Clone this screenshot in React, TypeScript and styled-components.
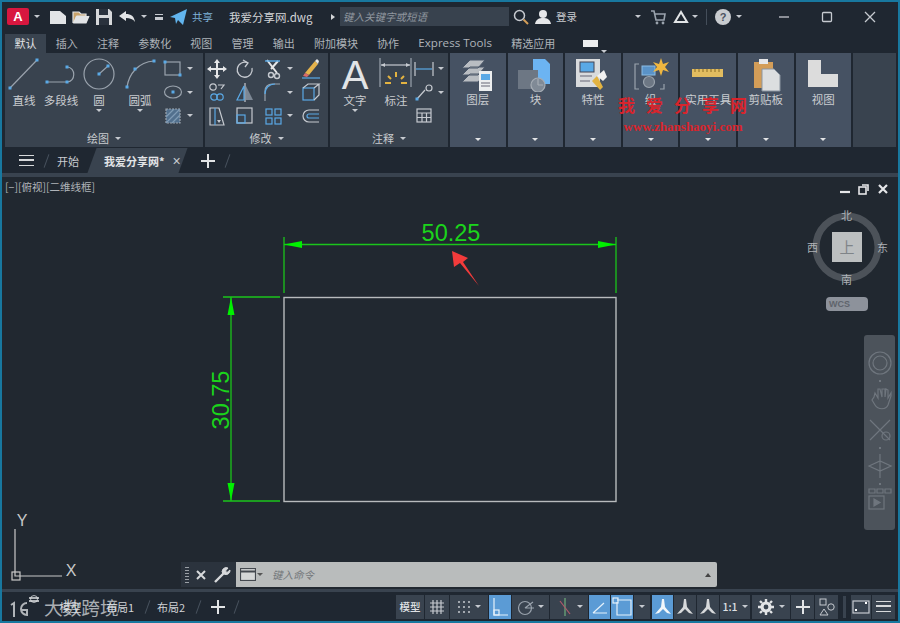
import React from "react";
import styled, { createGlobalStyle } from "styled-components";

const LINE = "#c6cad0";
const BLUE = "#5aa9e6";
const GREEN = "#1bc41b";
const BRIGHT = "#00f000";

const GlobalStyle = createGlobalStyle`
  html, body { margin: 0; padding: 0; background: #202831; }
  body { font-family: "Noto Sans CJK SC", "Noto Sans", sans-serif; }
`;

const Ic: React.FC<{ w?: number; h?: number; children?: React.ReactNode; stroke?: string; sw?: number }> = ({
  w = 22,
  h = 22,
  children,
  stroke = LINE,
  sw = 1.2,
}) => (
  <svg width={w} height={h} viewBox={`0 0 ${w} ${h}`} fill="none" stroke={stroke} strokeWidth={sw} style={{ flex: "none", display: "block" }}>
    {children}
  </svg>
);

const Dot: React.FC<{ x: number; y: number }> = ({ x, y }) => <rect x={x - 1.5} y={y - 1.5} width={3} height={3} fill={BLUE} stroke="none" />;

const Icons = {
  line: (
    <Ic w={36} h={36}>
      <path d="M4 31 31 3" stroke="#9aa3ad" />
      <Dot x={4} y={31} />
      <Dot x={31} y={3} />
    </Ic>
  ),
  polyline: (
    <Ic w={38} h={36}>
      <path d="M5 25H25C34 25 34 10 25 10" stroke="#9aa3ad" />
      <Dot x={5} y={25} />
      <Dot x={25} y={25} />
      <Dot x={25} y={10} />
    </Ic>
  ),
  circle: (
    <Ic w={38} h={36}>
      <circle cx={19} cy={17} r={15} stroke="#9aa3ad" />
      <path d="M19 17 28 9" stroke="#9aa3ad" />
      <Dot x={19} y={17} />
      <Dot x={28} y={9} />
    </Ic>
  ),
  arc: (
    <Ic w={44} h={36}>
      <path d="M9 30C11 17 20 5 36 4" stroke="#9aa3ad" />
      <Dot x={9} y={30} />
      <Dot x={17} y={12} />
      <Dot x={36} y={4} />
    </Ic>
  ),
  rect: (
    <Ic>
      <rect x={3} y={4} width={15} height={13} stroke="#9aa3ad" />
      <Dot x={18} y={17} />
      <Dot x={3} y={4} />
    </Ic>
  ),
  ellipse: (
    <Ic>
      <ellipse cx={11} cy={11} rx={8.5} ry={6} stroke="#9aa3ad" />
      <Dot x={11} y={11} />
    </Ic>
  ),
  hatch: (
    <Ic>
      <rect x={4} y={4} width={14} height={14} fill="#52708e" stroke="#9aa3ad" strokeDasharray="2 1" />
      <path d="M4 12 12 4M4 18 18 4M10 18 18 10" stroke="#7f9bb5" />
    </Ic>
  ),
  move: (
    <Ic sw={2}>
      <path d="M11 3V19M3 11H19" stroke="#e6e7e9" />
      <path d="M11 1 14 5H8ZM11 21 14 17H8ZM1 11 5 8V14ZM21 11 17 8V14Z" fill="#e6e7e9" stroke="none" />
    </Ic>
  ),
  rotate: (
    <Ic sw={1.3}>
      <path d="M14 5A7.5 7.5 0 1 0 18 10" />
      <path d="M9 2 14 5 11 9" />
    </Ic>
  ),
  trim: (
    <Ic sw={1.4}>
      <path d="M5 2 15 15M16 3 9 11" stroke="#e6e7e9" strokeWidth={2} />
      <circle cx={9} cy={17} r={2.5} />
      <circle cx={15} cy={18} r={2.5} />
      <path d="M3 3H18" stroke={BLUE} />
    </Ic>
  ),
  erase: (
    <Ic>
      <path d="M5 15 15 3 18 6 9 17Z" fill="#e5b34c" stroke="none" />
      <path d="M15 3 18 6 19 3 17 1Z" fill="#e6e7e9" stroke="none" />
      <path d="M5 15 9 17 7 19 3 18Z" fill="#d96a6a" stroke="none" />
      <path d="M2 20H20" stroke={BLUE} />
    </Ic>
  ),
  copy: (
    <Ic>
      <circle cx={7} cy={6} r={3.2} stroke={LINE} />
      <circle cx={8} cy={16} r={3.2} stroke={BLUE} />
      <circle cx={14} cy={16} r={3.2} stroke={BLUE} />
      <path d="M12 4H18L15 8" stroke={LINE} />
    </Ic>
  ),
  mirror: (
    <Ic>
      <path d="M11 2V21" stroke={LINE} />
      <path d="M10 5 3 19H10Z" stroke={BLUE} />
      <path d="M12 5 19 19H12Z" fill="#7c8794" stroke="none" />
    </Ic>
  ),
  fillet: (
    <Ic>
      <path d="M3 20V10C3 6 6 3 10 3H18" stroke="#9aa3ad" />
      <path d="M3 13C3 7 7 3 13 3" stroke={BLUE} />
    </Ic>
  ),
  solid: (
    <Ic>
      <rect x={3} y={7} width={11} height={12} stroke={BLUE} />
      <path d="M3 7 8 3H19L14 7M19 3V14L14 19" stroke={LINE} />
    </Ic>
  ),
  stretch: (
    <Ic>
      <path d="M4 3H13L18 20H4Z" stroke={LINE} />
      <path d="M9 3V20" stroke={BLUE} />
      <path d="M11 15H15L13 18Z" fill={LINE} stroke="none" />
    </Ic>
  ),
  scale: (
    <Ic>
      <rect x={3} y={3} width={15} height={15} stroke={LINE} />
      <rect x={3} y={10} width={8} height={8} stroke={BLUE} />
    </Ic>
  ),
  array: (
    <Ic>
      <rect x={4} y={4} width={6} height={6} stroke={BLUE} />
      <rect x={13} y={4} width={6} height={6} stroke={BLUE} />
      <rect x={4} y={13} width={6} height={6} stroke={BLUE} />
      <rect x={13} y={13} width={6} height={6} stroke={BLUE} />
    </Ic>
  ),
  offset: (
    <Ic>
      <path d="M19 5H9A6 6 0 0 0 9 17H19" stroke={LINE} />
      <path d="M19 9H9A2 2 0 0 0 9 13H19" stroke={BLUE} />
    </Ic>
  ),
  dimension: (
    <Ic w={34} h={36}>
      <path d="M1 1V30M32 1V30" stroke="#9aa3ad" />
      <path d="M2 8H31" stroke={LINE} />
      <path d="M2 8 6 6V10ZM31 8 27 6V10Z" fill={LINE} stroke="none" />
      <path d="M17 15V20M9 19 12 22M25 19 22 22M6 26H12M22 26H28" stroke="#e3b341" strokeWidth={2} />
    </Ic>
  ),
  linear: (
    <Ic>
      <path d="M2 4V18M20 4V18" stroke={LINE} />
      <path d="M3 11H19" stroke={BLUE} />
    </Ic>
  ),
  leader: (
    <Ic>
      <path d="M4 18 12 9" stroke={LINE} />
      <circle cx={16} cy={7} r={3} stroke={LINE} />
      <Dot x={4} y={18} />
    </Ic>
  ),
  table: (
    <Ic>
      <rect x={4} y={4} width={14} height={13} stroke={LINE} />
      <path d="M4 8H18M4 12.5H18M9 8V17M13.5 8V17" stroke={LINE} />
    </Ic>
  ),
};

const PanelIcons = {
  layer: (
    <Ic w={36} h={34}>
      <path d="M2 10 10 2H25L18 10ZM2 17 10 9H25L18 17ZM2 24 10 16H25L18 24Z" fill="#b9bdc2" stroke="#4a5668" strokeWidth={1} />
      <rect x={19} y={13} width={13} height={20} fill="#eceeef" stroke="none" />
      <rect x={21} y={16} width={9} height={6} fill="#5aa9e6" stroke="none" />
      <path d="M21 25H30M21 28H30" stroke="#667" />
    </Ic>
  ),
  block: (
    <Ic w={36} h={34}>
      <path d="M16 1H28L33 6V26H16Z" fill="#6cb4f2" stroke="none" />
      <rect x={1} y={12} width={20} height={19} fill="#6d7784" stroke="none" />
      <circle cx={21} cy={27} r={7} fill="#808a96" stroke="#a6adb5" />
      <path d="M21 27V21M21 27H26" stroke="#a6adb5" />
    </Ic>
  ),
  props: (
    <Ic w={36} h={34}>
      <rect x={1} y={1} width={24} height={28} fill="#d9dbdd" stroke="none" />
      <rect x={5} y={4} width={14} height={10} fill="#5aa9e6" stroke="#445" strokeWidth={1} />
      <path d="M5 18H17M5 23H15" stroke="#667" />
      <path d="M17 23 22 18 28 29 25 32Z" fill="#e3b341" stroke="none" />
      <path d="M22 18 29 12 32 19 28 23Z" fill="#f2f2f2" stroke="none" />
    </Ic>
  ),
  group: (
    <Ic w={36} h={34}>
      <path d="M6 6H2V31H6M27 31H31V26" stroke="#9aa3ad" />
      <rect x={9} y={8} width={13} height={9} fill="#5a93c8" stroke="#8bbde6" strokeWidth={1} />
      <circle cx={16} cy={24} r={5.5} fill="#6d7784" stroke="#9aa3ad" />
      <path d="M28 0 30 6 36 4 32 9 36 14 30 12 28 18 26 12 20 14 24 9 20 4 26 6Z" fill="#f0b740" stroke="none" />
    </Ic>
  ),
  ruler: (
    <Ic w={36} h={34}>
      <rect x={2} y={11} width={31} height={8} fill="#e2bd60" stroke="none" />
      <path d="M5 11V14M9 11V14M13 11V14M17 11V14M21 11V14M25 11V14M29 11V14" stroke="#8a6d25" strokeWidth={1} />
    </Ic>
  ),
  paste: (
    <Ic w={36} h={34}>
      <rect x={6} y={4} width={19} height={26} fill="#d39d58" stroke="none" />
      <rect x={11} y={1} width={9} height={5} fill="#e6e7e9" stroke="none" />
      <path d="M14 11H26L32 17V33H14Z" fill="#dcdee0" stroke="#8b95a1" strokeWidth={1} />
    </Ic>
  ),
  view: (
    <Ic w={36} h={34}>
      <path d="M3 2H16V16H33V29H3Z" fill="#dcdcdc" stroke="none" />
    </Ic>
  ),
};

const Tool: React.FC<{ w: number; label: string; caret?: boolean; children: React.ReactNode }> = ({ w, label, caret, children }) => (
  <LargeTool $w={w}>
    {children}
    <ToolLabel>{label}</ToolLabel>
    {caret && <ToolCaret />}
  </LargeTool>
);

const Panel: React.FC<{ w: number; title: string; children: React.ReactNode }> = ({ w, title, children }) => (
  <RibbonPanel $w={w}>
    <PanelBody>{children}</PanelBody>
    <PanelTitle>
      {title}
      <Caret />
    </PanelTitle>
  </RibbonPanel>
);

const Small: React.FC<{ caret?: boolean; children: React.ReactNode }> = ({ caret, children }) => (
  <SmallTool>
    {children}
    {caret && <Caret />}
  </SmallTool>
);

const tabs = ["默认", "插入", "注释", "参数化", "视图", "管理", "输出", "附加模块", "协作", "Express Tools", "精选应用"];
const vertical: [string, React.ReactNode][] = [
  ["图层", PanelIcons.layer],
  ["块", PanelIcons.block],
  ["特性", PanelIcons.props],
  ["组", PanelIcons.group],
  ["实用工具", PanelIcons.ruler],
  ["剪贴板", PanelIcons.paste],
  ["视图", PanelIcons.view],
];

export default function App() {
  return (
    <Frame>
      <GlobalStyle />
      <TitleBar>
        <Logo>A</Logo>
        <Caret $ml={5} />
        <QuickIcons>
          <Ic w={18} h={18}>
            <path d="M1 3H11L17 8V16H1Z" fill="#e2e4e6" stroke="none" />
          </Ic>
          <Ic w={18} h={18}>
            <path d="M1 15V4H7L9 6H14V8H5L2 15H14L17 8" fill="#c9a36a" stroke="#e2e4e6" />
            <path d="M1 15 4 8H17L14 15Z" fill="#e2e4e6" stroke="none" />
          </Ic>
          <Ic w={18} h={18}>
            <path d="M1 1H14L17 4V17H1Z" fill="#d6d8da" stroke="none" />
            <rect x={4} y={1} width={9} height={6} fill="#2a323d" stroke="none" />
            <rect x={4} y={10} width={10} height={7} fill="#2a323d" stroke="none" />
          </Ic>
          <Ic w={18} h={18}>
            <path d="M1 8 8 3V6C13 6 16 8 17 14 15 11 12 10 8 10V13Z" fill="#e2e4e6" stroke="none" />
          </Ic>
        </QuickIcons>
        <Caret $ml={5} />
        <MenuGlyph />
        <ShareBlock>
          <Ic w={18} h={18}>
            <path d="M0 9 17 1 13 17 8 12 6 16 5 10Z" fill="#62b5ee" stroke="none" />
          </Ic>
          共享
        </ShareBlock>
        <FileName>我爱分享网.dwg</FileName>
        <RightArrow />
        <SearchBox>键入关键字或短语</SearchBox>
        <SearchIcon>
          <Ic w={16} h={16} sw={1.5}>
            <circle cx={6.5} cy={6.5} r={5} />
            <path d="M10.5 10.5 15 15" stroke="#d39d58" strokeWidth={2} />
          </Ic>
        </SearchIcon>
        <Ic w={16} h={16}>
          <circle cx={8} cy={5} r={4} fill="#e6e7e9" stroke="none" />
          <path d="M0 15C1 10 4 9 8 9S15 10 16 15Z" fill="#e6e7e9" stroke="none" />
        </Ic>
        <SignIn>登录</SignIn>
        <Caret $ml={58} />
        <CartWrap>
          <Ic w={16} h={16}>
            <path d="M1 2H4L6 11H14L15 5H5" stroke="#9aa3ad" strokeWidth={1.6} />
            <circle cx={7} cy={14} r={1.4} fill="#9aa3ad" stroke="none" />
            <circle cx={13} cy={14} r={1.4} fill="#9aa3ad" stroke="none" />
          </Ic>
        </CartWrap>
        <Ic w={16} h={16} sw={2}>
          <path d="M8 3 2 13H14Z" stroke="#e2e4e6" />
        </Ic>
        <Caret $ml={3} />
        <TitleDivider />
        <HelpBadge>?</HelpBadge>
        <Caret $ml={5} />
        <WindowButtons>
          <Ic w={12} h={12} sw={1.3}>
            <path d="M1 6H11" />
          </Ic>
          <Ic w={12} h={12} sw={1.3}>
            <rect x={1.5} y={1.5} width={9} height={9} rx={1} />
          </Ic>
          <Ic w={12} h={12} sw={1.3}>
            <path d="M1 1 11 11M11 1 1 11" />
          </Ic>
        </WindowButtons>
      </TitleBar>

      <TabRow>
        {tabs.map((t, i) => (
          <RibbonTab key={t} $active={i === 0} $latin={t === "Express Tools"}>
            {t}
          </RibbonTab>
        ))}
        <MiniBox />
        <Caret $ml={3} />
      </TabRow>

      <Ribbon>
        <Panel w={198} title="绘图">
          <Tool w={36} label="直线">
            {Icons.line}
          </Tool>
          <Tool w={38} label="多段线">
            {Icons.polyline}
          </Tool>
          <Tool w={38} label="圆" caret>
            {Icons.circle}
          </Tool>
          <Tool w={44} label="圆弧" caret>
            {Icons.arc}
          </Tool>
          <SmallGrid $cols="38px">
            <Small caret>{Icons.rect}</Small>
            <Small caret>{Icons.ellipse}</Small>
            <Small caret>{Icons.hatch}</Small>
          </SmallGrid>
        </Panel>
        <Panel w={123} title="修改">
          <SmallGrid $cols="28px 28px 38px 28px">
            <Small>{Icons.move}</Small>
            <Small>{Icons.rotate}</Small>
            <Small caret>{Icons.trim}</Small>
            <Small>{Icons.erase}</Small>
            <Small>{Icons.copy}</Small>
            <Small>{Icons.mirror}</Small>
            <Small caret>{Icons.fillet}</Small>
            <Small>{Icons.solid}</Small>
            <Small>{Icons.stretch}</Small>
            <Small>{Icons.scale}</Small>
            <Small caret>{Icons.array}</Small>
            <Small>{Icons.offset}</Small>
          </SmallGrid>
        </Panel>
        <Panel w={118} title="注释">
          <Tool w={48} label="文字" caret>
            <BigLetter>A</BigLetter>
          </Tool>
          <Tool w={34} label="标注">
            {Icons.dimension}
          </Tool>
          <SmallGrid $cols="34px">
            <Small caret>{Icons.linear}</Small>
            <Small caret>{Icons.leader}</Small>
            <Small>{Icons.table}</Small>
          </SmallGrid>
        </Panel>
        {vertical.map(([label, icon]) => (
          <VerticalPanel key={label}>
            {icon}
            <ToolLabel>{label}</ToolLabel>
            <BottomCaret />
          </VerticalPanel>
        ))}
        <RibbonRest />
      </Ribbon>

      <DocBar>
        <Hamburger />
        <Slash />
        <DocTab>开始</DocTab>
        <ActiveDoc>
          <ActiveName>我爱分享网*</ActiveName>
          <DocClose>×</DocClose>
        </ActiveDoc>
        <PlusGlyph $ml={18} />
        <Slash $ml={12} />
      </DocBar>
      <Strip $h={4} />

      <Viewport>
        <CanvasSvg viewBox="2 177 896 412">
          <g stroke={GREEN} strokeWidth={1.3}>
            <path d="M284 237V293M616 237V293M284 244.5H616" />
            <path d="M231 297V501M223 297H280M223 501H280" />
          </g>
          <g fill={BRIGHT}>
            <path d="M284 244.5 302 241V248ZM616 244.5 598 241V248Z" />
            <path d="M231 297 227.5 315H234.5ZM231 501 227.5 483H234.5Z" />
          </g>
          <rect x={284} y={297.5} width={332} height={204} fill="none" stroke="#b8bbbd" strokeWidth={1.4} />
          <DimText x={451} y={240.5}>
            50.25
          </DimText>
          <DimText x={228.5} y={400} transform="rotate(-90 228.5 400)">
            30.75
          </DimText>
          <path d="M452 251 468 258 463 262 479 286 460 263 454 267Z" fill="#f23b3b" />
          <g stroke="#c8c8c8" strokeWidth={1.2} fill="none">
            <path d="M15 529V576H62" />
            <rect x={12} y={572} width={8} height={8} />
          </g>
          <AxisText x={22} y={526}>
            Y
          </AxisText>
          <AxisText x={71} y={576}>
            X
          </AxisText>
          <circle cx={847} cy={247} r={31} fill="none" stroke="#4c5259" strokeWidth={7} />
        </CanvasSvg>

        <ViewLabel>[−][俯视][二维线框]</ViewLabel>
        <ViewportControls>
          <Ic w={12} h={12} sw={2.2} stroke="#e6e7e9">
            <path d="M1 9H11" />
          </Ic>
          <Ic w={12} h={12} sw={1.6} stroke="#e6e7e9">
            <rect x={1} y={4} width={7} height={7} />
            <path d="M4 2H10V8" />
          </Ic>
          <Ic w={12} h={12} sw={2.2} stroke="#e6e7e9">
            <path d="M2 2 10 10M10 2 2 10" />
          </Ic>
        </ViewportControls>

        <ViewCube>
          <CubeFace>上</CubeFace>
          <Compass $pos="n">北</Compass>
          <Compass $pos="s">南</Compass>
          <Compass $pos="w">西</Compass>
          <Compass $pos="e">东</Compass>
        </ViewCube>
        <WcsPill>WCS</WcsPill>

        <NavBar>
          <Ic w={28} h={28} stroke="#6f767e">
            <circle cx={14} cy={14} r={11} />
            <circle cx={14} cy={14} r={7} />
          </Ic>
          <NavDot />
          <Ic w={28} h={28} stroke="#6f767e">
            <path d="M6 15 9 20C12 25 20 25 22 20L25 11V8L22 13V5L20 4 19 12V4H16V12L14 4H12V13L9 8 8 12Z" />
          </Ic>
          <Ic w={28} h={28} stroke="#6f767e">
            <path d="M4 4 24 24M24 4 4 24" />
            <circle cx={20} cy={20} r={4} />
          </Ic>
          <NavDot />
          <Ic w={28} h={28} stroke="#6f767e">
            <path d="M14 2V26M3 14 14 9 25 14 14 19Z" />
          </Ic>
          <NavDot />
          <Ic w={24} h={22} stroke="#6f767e">
            <path d="M1 1H7V5H1ZM9 1H15V5H9ZM17 1H23V5H17Z" />
            <rect x={1} y={8} width={15} height={13} />
            <path d="M6 11 12 14.5 6 18Z" fill="#6f767e" />
          </Ic>
        </NavBar>

        <CommandLine>
          <CommandHandle>
            <Grip />
            <Ic w={12} h={12} sw={2} stroke="#d7d9db">
              <path d="M2 2 10 10M10 2 2 10" />
            </Ic>
            <Ic w={18} h={18} sw={2.4} stroke="#d7d9db">
              <path d="M2 16 11 7" />
              <path d="M10 8A4 4 0 0 1 15 2L12.5 5 14 6.5 17 4A4 4 0 0 1 11 8" fill="#d7d9db" strokeWidth={1} />
            </Ic>
          </CommandHandle>
          <CommandInput>
            <Ic w={16} h={13} stroke="#44494f">
              <rect x={0.5} y={0.5} width={15} height={12} fill="#d5d7d7" />
              <path d="M0.5 3.5H15.5" strokeWidth={2} />
            </Ic>
            <Caret $color="#555" $ml={1} />
            <CommandPrompt>键入命令</CommandPrompt>
            <UpCaret />
          </CommandInput>
        </CommandLine>
      </Viewport>

      <Strip $h={3} />
      <StatusBar>
        <LayoutTabs>
          <LayoutTab $w={45}>模型</LayoutTab>
          <LayoutTab $w={54}>布局1</LayoutTab>
          <Slash $ml={0} />
          <LayoutTab $w={46}>布局2</LayoutTab>
          <Slash $ml={4} />
          <PlusGlyph $ml={12} />
          <Slash $ml={11} />
        </LayoutTabs>
        <StatusGroups>
          <StatusButton $w={28}>模型</StatusButton>
          <StatusButton $w={24}>
            <Ic w={16} h={16} sw={1.2}>
              <path d="M4 1V15M8 1V15M12 1V15M1 4H15M1 8H15M1 12H15" />
            </Ic>
          </StatusButton>
          <StatusButton $w={38}>
            <Ic w={14} h={14} sw={2}>
              <path d="M2 2V2.1M7 2V2.1M12 2V2.1M2 7V7.1M7 7V7.1M12 7V7.1M2 12V12.1M7 12V12.1M12 12V12.1" strokeLinecap="round" />
            </Ic>
            <Caret $ml={4} />
          </StatusButton>
          <StatusButton $w={22} $active>
            <Ic w={18} h={20} stroke="#e4f1fb">
              <path d="M3 1V18H17" />
              <rect x={3} y={13} width={5} height={5} />
            </Ic>
          </StatusButton>
          <StatusButton $w={37}>
            <Ic w={18} h={18} stroke="#9aa3ad">
              <circle cx={8} cy={10} r={6.5} />
              <path d="M8 10 16 4M8 10H17" />
            </Ic>
            <Caret $ml={3} />
          </StatusButton>
          <StatusButton $w={38}>
            <Ic w={18} h={20}>
              <path d="M9 1V19" stroke="#6fae7c" />
              <path d="M4 4 14 17" stroke="#b0596a" />
            </Ic>
            <Caret $ml={3} />
          </StatusButton>
          <StatusButton $w={21} $active>
            <Ic w={18} h={18} stroke="#e4f1fb">
              <path d="M2 15H16M2 15 13 5" />
            </Ic>
          </StatusButton>
          <StatusButton $w={22} $active>
            <Ic w={20} h={20} stroke="#e4f1fb">
              <path d="M5 3H19V18H5V5" />
              <rect x={1} y={1} width={5} height={5} />
            </Ic>
          </StatusButton>
          <StatusButton $w={16}>
            <Caret $ml={0} />
          </StatusButton>
          <StatusGap />
          <StatusButton $w={21} $active>
            <AnnotationGlyph $fill="#f2f7fb" />
          </StatusButton>
          <StatusButton $w={22}>
            <AnnotationGlyph $fill="#d7d9db" />
          </StatusButton>
          <StatusButton $w={22}>
            <AnnotationGlyph $fill="#d7d9db" />
          </StatusButton>
          <StatusButton $w={30}>
            1:1
            <Caret $ml={4} />
          </StatusButton>
          <StatusGap />
          <StatusButton $w={38}>
            <Ic w={16} h={16} sw={3.2} stroke="#e2e4e6">
              <circle cx={8} cy={8} r={4} />
              <path d="M8 0V3M8 13V16M0 8H3M13 8H16M2 2 4 4M12 12 14 14M14 2 12 4M4 12 2 14" strokeWidth={2.4} />
            </Ic>
            <Caret $ml={5} />
          </StatusButton>
          <StatusButton $w={23}>
            <PlusGlyph />
          </StatusButton>
          <StatusButton $w={23}>
            <Ic w={16} h={18} sw={1}>
              <rect x={1} y={1} width={6} height={6} />
              <circle cx={12} cy={9} r={3.2} />
              <path d="M5 11 9 17H1Z" />
            </Ic>
          </StatusButton>
          <StatusRule />
          <StatusButton $w={20}>
            <Ic w={18} h={14}>
              <rect x={1} y={1} width={16} height={12} />
              <path d="M3 10H5M13 3H15" strokeWidth={2} stroke="#fff" />
            </Ic>
          </StatusButton>
          <StatusButton $w={23}>
            <Hamburger />
          </StatusButton>
        </StatusGroups>
      </StatusBar>

      <Watermark>
        <WatermarkTitle>我爱分享网</WatermarkTitle>
        <WatermarkUrl>www.zhanshaoyi.com</WatermarkUrl>
      </Watermark>
      <BrandMark>
        <Ic w={32} h={24} sw={2} stroke="rgba(225,228,230,0.75)">
          <path d="M2 10 5 8V22M18 8A5.5 5.5 0 1 0 18 20V15H13M20 3H30M20 6H30" />
          <circle cx={25} cy={4} r={3.5} strokeWidth={1} />
        </Ic>
        <BrandText>大数跨境</BrandText>
      </BrandMark>
    </Frame>
  );
}

const Frame = styled.div`
  position: relative;
  width: 900px;
  height: 623px;
  box-sizing: border-box;
  border: 2px solid #18789f;
  background: #1f2731;
  display: flex;
  flex-direction: column;
  overflow: hidden;
  color: #c9ccd0;
  font-size: 11px;
`;

const Caret = styled.span<{ $ml?: number; $color?: string }>`
  display: inline-block;
  flex: none;
  width: 0;
  height: 0;
  margin-left: ${(p) => p.$ml ?? 3}px;
  border-left: 3px solid transparent;
  border-right: 3px solid transparent;
  border-top: 3.5px solid ${(p) => p.$color ?? "#c6cad0"};
`;

const ToolCaret = styled(Caret)`
  margin-left: 0;
  margin-top: 1px;
`;

const TitleBar = styled.div`
  height: 29px;
  flex: none;
  display: flex;
  align-items: center;
  padding-left: 5px;
`;

const Logo = styled.div`
  width: 22px;
  height: 17px;
  background: #d8173f;
  border-radius: 2px;
  color: #fff;
  font: bold 13px/17px "Liberation Sans", sans-serif;
  text-align: center;
`;

const QuickIcons = styled.div`
  display: flex;
  gap: 5px;
  margin-left: 9px;
  align-items: center;
`;

const MenuGlyph = styled.span`
  width: 8px;
  height: 6px;
  margin-left: 8px;
  border-top: 1.5px solid #c6cad0;
  border-bottom: 3px solid #c6cad0;
  box-sizing: border-box;
`;

const ShareBlock = styled.div`
  display: flex;
  align-items: center;
  gap: 4px;
  margin-left: 7px;
  color: #7fb2d9;
  font-size: 10.5px;
`;

const FileName = styled.div`
  margin-left: 16px;
  font-size: 11.5px;
  width: 91px;
  color: #d3d5d8;
  white-space: nowrap;
`;

const RightArrow = styled.span`
  width: 0;
  height: 0;
  margin-left: 11px;
  border-top: 3px solid transparent;
  border-bottom: 3px solid transparent;
  border-left: 4px solid #d3d5d8;
`;

const SearchBox = styled.div`
  width: 169px;
  height: 19px;
  margin-left: 5px;
  padding-left: 3px;
  box-sizing: border-box;
  background: #38424e;
  color: #8f969e;
  font-size: 10.5px;
  font-style: italic;
  line-height: 19px;
`;

const SearchIcon = styled.div`
  margin: 0 6px 0 4px;
`;

const SignIn = styled.span`
  margin-left: 5px;
  font-size: 10.5px;
`;

const CartWrap = styled.div`
  margin: 0 7px 0 9px;
`;

const TitleDivider = styled.span`
  width: 1px;
  height: 16px;
  margin: 0 8px;
  background: #444e5a;
`;

const HelpBadge = styled.span`
  width: 16px;
  height: 16px;
  border-radius: 50%;
  background: #c9ccd0;
  color: #4a5260;
  font: bold 11px/16px "Liberation Sans", sans-serif;
  text-align: center;
`;

const WindowButtons = styled.div`
  display: flex;
  gap: 31px;
  margin-left: 36px;
`;

const TabRow = styled.div`
  height: 22px;
  flex: none;
  display: flex;
  align-items: flex-end;
  padding-left: 3px;
`;

const RibbonTab = styled.div<{ $active?: boolean; $latin?: boolean }>`
  height: 19px;
  padding: 0 9.6px;
  line-height: 18px;
  font-size: ${(p) => (p.$latin ? "11.6px" : "11px")};
  font-family: ${(p) => (p.$latin ? '"Open Sans", sans-serif' : "inherit")};
  white-space: nowrap;
  color: ${(p) => (p.$active ? "#e2e4e6" : "#aeb3b9")};
  background: ${(p) => (p.$active ? "#39434f" : "transparent")};
`;

const MiniBox = styled.span`
  width: 15px;
  height: 7px;
  margin: 0 0 6px 18px;
  background: #eceeef;
`;

const Ribbon = styled.div`
  height: 94px;
  flex: none;
  display: flex;
  gap: 2px;
  padding-left: 3px;
  padding-right: 2px;
`;

const RibbonPanel = styled.div<{ $w: number }>`
  width: ${(p) => p.$w}px;
  flex: none;
  display: flex;
  flex-direction: column;
  background: #39434f;
`;

const PanelBody = styled.div`
  height: 76px;
  display: flex;
  padding-top: 4px;
  box-sizing: border-box;
  padding-left: 1px;
`;

const PanelTitle = styled.div`
  height: 18px;
  display: flex;
  justify-content: center;
  align-items: center;
  font-size: 11px;
  color: #c9ccd0;
  gap: 3px;
`;

const LargeTool = styled.div<{ $w: number }>`
  width: ${(p) => p.$w}px;
  flex: none;
  display: flex;
  flex-direction: column;
  align-items: center;
`;

const BigLetter = styled.div`
  height: 36px;
  font: 40px/36px "Liberation Sans", sans-serif;
  color: #e2e4e6;
`;

const ToolLabel = styled.div`
  margin-top: -1px;
  font-size: 11.5px;
  line-height: 16px;
  color: #c9ccd0;
  white-space: nowrap;
`;

const SmallGrid = styled.div<{ $cols: string }>`
  display: grid;
  grid-template-columns: ${(p) => p.$cols};
  grid-auto-rows: 23.5px;
`;

const SmallTool = styled.div`
  display: flex;
  align-items: center;
`;

const VerticalPanel = styled.div`
  position: relative;
  width: 55.6px;
  flex: none;
  display: flex;
  flex-direction: column;
  align-items: center;
  padding-top: 5px;
  box-sizing: border-box;
  background: #465263;
`;

const BottomCaret = styled(Caret)`
  position: absolute;
  bottom: 6px;
  left: 50%;
  margin-left: -3px;
  border-top-color: #e2e4e6;
`;

const RibbonRest = styled.div`
  flex: 1;
  background: #39434f;
`;

const DocBar = styled.div`
  height: 25px;
  margin-top: 1px;
  flex: none;
  display: flex;
  align-items: center;
  padding-left: 17px;
`;

const Hamburger = styled.span`
  position: relative;
  display: block;
  width: 15px;
  height: 11px;
  box-sizing: border-box;
  border-top: 1.5px solid #d7d9db;
  border-bottom: 1.5px solid #d7d9db;
  &::after {
    content: "";
    position: absolute;
    left: 0;
    right: 0;
    top: 3.25px;
    height: 1.5px;
    background: #d7d9db;
  }
`;

const Slash = styled.span<{ $ml?: number }>`
  width: 1px;
  height: 14px;
  margin-left: ${(p) => p.$ml ?? 12}px;
  background: #48525e;
  transform: rotate(20deg);
`;

const DocTab = styled.div`
  margin-left: 10px;
  font-size: 11px;
`;

const ActiveDoc = styled.div`
  position: relative;
  z-index: 0;
  height: 100%;
  width: 91px;
  margin-left: 13px;
  display: flex;
  align-items: center;
  padding-left: 12px;
  box-sizing: border-box;
  &::before {
    content: "";
    position: absolute;
    inset: 0;
    z-index: -1;
    background: #39434f;
    transform: skewX(-20deg);
  }
`;

const ActiveName = styled.span`
  font-size: 11px;
  font-weight: 700;
  color: #e2e4e6;
  white-space: nowrap;
`;

const DocClose = styled.span`
  margin-left: 8px;
  font: 14px "Liberation Sans", sans-serif;
  color: #c9ccd0;
`;

const PlusGlyph = styled.span<{ $ml?: number }>`
  flex: none;
  width: 14px;
  height: 14px;
  margin-left: ${(p) => p.$ml ?? 0}px;
  background: linear-gradient(#e2e4e6, #e2e4e6) center / 14px 2px no-repeat,
    linear-gradient(#e2e4e6, #e2e4e6) center / 2px 14px no-repeat;
`;

const Strip = styled.div<{ $h: number }>`
  flex: none;
  height: ${(p) => p.$h}px;
  background: #39434f;
`;

const Viewport = styled.div`
  position: relative;
  flex: 1;
  min-height: 0;
  background: #212830;
`;

const CanvasSvg = styled.svg`
  position: absolute;
  inset: 0;
  width: 100%;
  height: 100%;
`;

const DimText = styled.text`
  font: 23.5px "Liberation Sans", sans-serif;
  fill: #1bd41b;
  text-anchor: middle;
`;

const AxisText = styled.text`
  font: 16px "Liberation Sans", sans-serif;
  fill: #c8c8c8;
  text-anchor: middle;
`;

const ViewLabel = styled.div`
  position: absolute;
  left: 3px;
  top: 2px;
  font-size: 10.5px;
  color: #b0b4b9;
`;

const ViewportControls = styled.div`
  position: absolute;
  top: 6px;
  right: 9px;
  display: flex;
  gap: 7px;
`;

const ViewCube = styled.div`
  position: absolute;
  left: 809px;
  top: 34px;
  width: 72px;
  height: 72px;
  display: flex;
  align-items: center;
  justify-content: center;
`;

const CubeFace = styled.div`
  width: 30px;
  height: 30px;
  background: #bcbfc0;
  color: #7f8488;
  font-size: 15px;
  line-height: 30px;
  text-align: center;
`;

const compassPositions = {
  n: "left: 30px; top: -4px;",
  s: "left: 30px; bottom: -4px;",
  w: "left: -4px; top: 28px;",
  e: "right: -5px; top: 28px;",
};

const Compass = styled.span<{ $pos: keyof typeof compassPositions }>`
  position: absolute;
  ${(p) => compassPositions[p.$pos]}
  font-size: 11px;
  line-height: 16px;
  color: #aeb2b6;
`;

const WcsPill = styled.div`
  position: absolute;
  left: 824px;
  top: 120px;
  width: 42px;
  height: 14px;
  padding-left: 3px;
  box-sizing: border-box;
  border-radius: 4px;
  background: #8d929b;
  color: #5f646c;
  font: bold 9px/14px "Liberation Sans", sans-serif;
`;

const NavBar = styled.div`
  position: absolute;
  right: 3px;
  top: 158px;
  width: 31px;
  height: 195px;
  padding-top: 14px;
  box-sizing: border-box;
  display: flex;
  flex-direction: column;
  align-items: center;
  gap: 3px;
  border-radius: 3px;
  background: #4c535b;
`;

const NavDot = styled.span`
  width: 2px;
  height: 2px;
  background: #6f767e;
`;

const CommandLine = styled.div`
  position: absolute;
  left: 179px;
  top: 385px;
  height: 25px;
  display: flex;
`;

const CommandHandle = styled.div`
  width: 55px;
  display: flex;
  align-items: center;
  gap: 6px;
  padding-left: 4px;
  box-sizing: border-box;
  background: #2b333d;
`;

const Grip = styled.span`
  width: 4px;
  height: 16px;
  background: repeating-linear-gradient(#9aa0a6 0 1px, transparent 1px 3px);
`;

const CommandInput = styled.div`
  width: 481px;
  display: flex;
  align-items: center;
  padding: 0 6px 0 4px;
  box-sizing: border-box;
  border-radius: 0 2px 2px 0;
  background: #b9bcbc;
`;

const CommandPrompt = styled.span`
  flex: 1;
  margin-left: 9px;
  font-size: 10.5px;
  font-style: italic;
  color: #74787b;
`;

const UpCaret = styled.span`
  border-left: 3.5px solid transparent;
  border-right: 3.5px solid transparent;
  border-bottom: 4px solid #444;
`;

const StatusBar = styled.div`
  flex: none;
  height: 29px;
  display: flex;
  align-items: center;
  justify-content: space-between;
`;

const LayoutTabs = styled.div`
  display: flex;
  align-items: center;
  padding-left: 46px;
`;

const LayoutTab = styled.div<{ $w: number }>`
  width: ${(p) => p.$w}px;
  font-size: 11px;
  text-align: center;
  color: #d0d3d6;
`;

const StatusGroups = styled.div`
  display: flex;
  align-items: center;
  height: 24px;
  gap: 1px;
  padding-right: 3px;
`;

const StatusButton = styled.div<{ $w: number; $active?: boolean }>`
  width: ${(p) => p.$w}px;
  height: 24px;
  flex: none;
  display: flex;
  align-items: center;
  justify-content: center;
  font-size: 10.5px;
  font-weight: 500;
  color: #dfe1e4;
  background: ${(p) => (p.$active ? "#5b9bd5" : "#39434f")};
`;

const StatusGap = styled.span`
  width: 0;
`;

const StatusRule = styled.span`
  width: 3px;
  height: 22px;
  margin: 0 4px;
  background: #39434f;
`;

const AnnotationGlyph: React.FC<{ $fill: string }> = ({ $fill }) => (
  <Ic w={18} h={20}>
    <path d="M8 2 10 2 11 10 17 17 13 16 9 12 5 16 1 17 7 10Z" fill={$fill} stroke="none" />
  </Ic>
);

const Watermark = styled.div`
  position: absolute;
  left: 616px;
  top: 92px;
  width: 130px;
  font-family: "Liberation Serif", "Noto Sans CJK SC", serif;
  color: #d8242c;
  font-weight: 700;
  text-align: center;
`;

const WatermarkTitle = styled.div`
  font-family: "Noto Sans CJK SC", sans-serif;
  font-size: 17px;
  line-height: 22px;
  letter-spacing: 11px;
  white-space: nowrap;
`;

const WatermarkUrl = styled.div`
  margin-top: 4px;
  font-size: 13px;
  line-height: 14px;
  white-space: nowrap;
`;

const BrandMark = styled.div`
  position: absolute;
  left: 7px;
  bottom: 2px;
  display: flex;
  align-items: center;
  gap: 3px;
`;

const BrandText = styled.span`
  font-size: 18.7px;
  line-height: 24px;
  color: rgba(225, 228, 230, 0.72);
`;
